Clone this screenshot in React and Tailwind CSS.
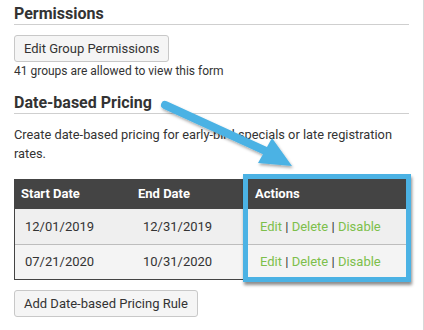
import React from 'react';

const rows = [
  { start: '12/01/2019', end: '12/31/2019', bg: 'bg-[#efefef]' },
  { start: '07/21/2020', end: '10/31/2020', bg: 'bg-[#f4f4f4]' },
];

const Arrow = () => (
  <svg className="absolute left-0 top-0 pointer-events-none" width="424" height="330">
    <defs>
      <filter id="sh" x="-20%" y="-20%" width="140%" height="140%">
        <feDropShadow dx="1" dy="2" stdDeviation="1.5" floodColor="#000" floodOpacity="0.35" />
      </filter>
    </defs>
    <g filter="url(#sh)" fill="#4bb2e4">
      <line x1="165" y1="105" x2="268" y2="152" stroke="#4bb2e4" strokeWidth="8" strokeLinecap="round" />
      <polygon points="272,138 292,166 258,163" />
    </g>
  </svg>
);

export default function App() {
  return (
    <div className="relative w-[424px] h-[330px] bg-white border-r border-[#d8d8d8] overflow-hidden text-[#333]" style={{ fontFamily: 'Roboto, "Liberation Sans", sans-serif' }}>
      <div className="pl-[14px] pr-[14px] pt-[4px]">
        {/* Permissions */}
        <h2 className="text-[16px] font-bold leading-[19px] pb-[1px] border-b border-[#cfcfcf]">Permissions</h2>
        <button className="mt-[10px] h-[27px] px-[9px] text-[13px] bg-[#f5f5f5] border border-[#c8c8c8] rounded-[3px] text-[#333]">
          Edit Group Permissions
        </button>
        <p className="text-[12px] leading-[14px] mt-[2px]">41 groups are allowed to view this form</p>

        {/* Date-based Pricing */}
        <h2 className="mt-[15px] text-[16px] font-bold leading-[19px] pb-[1px] border-b border-[#cfcfcf]">Date-based Pricing</h2>
        <p className="mt-[11px] text-[12.8px] leading-[19px] max-w-[385px]">
          Create date-based pricing for early-bird specials or late registration rates.
        </p>

        <div className="mt-[16px] w-[394px] border-l border-b border-[#444]">
          <div className="flex h-[30px] items-center bg-[#444] text-white text-[13px] font-bold">
            <div className="w-[117px] pl-[6px]">Start Date</div>
            <div className="w-[117px] pl-[6px]">End Date</div>
            <div className="pl-[6px]">Actions</div>
          </div>
          {rows.map((r, i) => (
            <div key={r.start} className={`flex h-[35px] items-center text-[13px] ${r.bg} ${i > 0 ? 'border-t border-[#bdbdbd]' : ''}`}>
              <div className="w-[117px] pl-[10px]">{r.start}</div>
              <div className="w-[117px] pl-[11px]">{r.end}</div>
              <div className="pl-[11px] text-[#333]">
                <span className="text-[#7dbf4b]">Edit</span> | <span className="text-[#7dbf4b]">Delete</span> | <span className="text-[#7dbf4b]">Disable</span>
              </div>
            </div>
          ))}
        </div>

        <button className="mt-[10px] h-[27px] px-[9px] text-[13px] bg-[#f5f5f5] border border-[#c8c8c8] rounded-[3px] text-[#333]">
          Add Date-based Pricing Rule
        </button>
      </div>

      {/* highlight box around Actions column */}
      <div className="absolute left-[243px] top-[174px] w-[168px] h-[108px] border-[5px] border-[#4bb2e4] shadow-[1px_3px_3px_rgba(0,0,0,0.45)] pointer-events-none" />
      <Arrow />
    </div>
  );
}
